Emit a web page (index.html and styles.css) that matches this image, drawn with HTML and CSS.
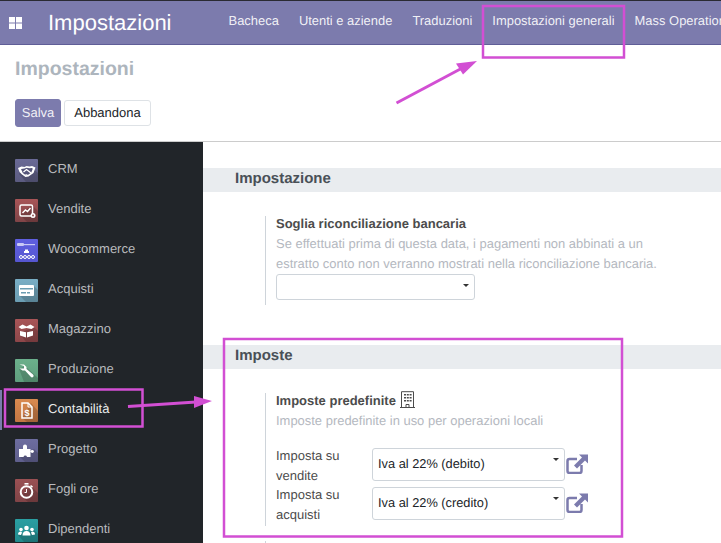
FILE: index.html
```html
<!DOCTYPE html>
<html lang="it">
<head>
<meta charset="utf-8">
<title>Impostazioni</title>
<link rel="stylesheet" href="styles.css">
</head>
<body>
<div class="page">
  <header class="navbar">
    <svg class="apps" viewBox="0 0 13 12" width="13" height="12"><rect width="6" height="5.5"/><rect x="7" width="6" height="5.5"/><rect y="6.5" width="6" height="5.5"/><rect x="7" y="6.5" width="6" height="5.5"/></svg>
    <div class="brand">Impostazioni</div>
    <nav class="menu">
      <a>Bacheca</a><a>Utenti e aziende</a><a>Traduzioni</a><a>Impostazioni generali</a><a>Mass Operations</a>
    </nav>
  </header>
  <section class="control">
    <h1>Impostazioni</h1>
    <div class="buttons">
      <button class="btn primary">Salva</button>
      <button class="btn plain">Abbandona</button>
    </div>
  </section>
  <div class="body">
    <aside class="side">
      <div class="item"><span class="app crm"><svg viewBox="0 0 23 23"><path class="sh" d="M23 23H11L4 15l3-6 9-1 7 6z"/><path class="wf" d="M3 9l3.500-1.500 3 .5 2-1 3 .5 2.500-.5 3.500 1.500-2 5.500-5 3.500-3 .5-3.500-2.500-2.500-2.500z"/><path class="hole" d="M6 10l3.500-.5 2-.8 3 .5 2.500-.2.800.8-1.500 3.700-3.500 2.500-2 .3-3-2.300z"/><path class="stline" d="M8.500 13l3-2.500 4.500 3.500M10.500 15.500l2.500 1"/></svg></span><span class="name">CRM</span></div>
      <div class="item"><span class="app ven"><svg viewBox="0 0 23 23"><path class="sh" d="M23 23H12L5 16 17 6l6 6z"/><rect class="st" x="5" y="6" width="12.500" height="11" rx="1.500"/><path class="st" d="M7.500 14l3-3 2 1.500 3-3.500"/><circle class="wf" cx="18" cy="16.500" r="2.500"/><circle class="venhole" cx="18" cy="16.500" r=".9"/></svg></span><span class="name">Vendite</span></div>
      <div class="item"><span class="app woo"><svg viewBox="0 0 23 23"><rect class="pale" x="2" y="4" width="7" height="3" rx="1"/><rect class="pale" x="9" y="5" width="11" height="1.200"/><path class="wf" d="M10 10.500h3v1.500h1v2h-5v-2h1z"/><circle class="st thin" cx="6" cy="18" r="1.500"/><circle class="st thin" cx="10" cy="18" r="1.500"/><circle class="st thin" cx="14" cy="18" r="1.500"/><circle class="st thin" cx="18" cy="18" r="1.500"/></svg></span><span class="name">Woocommerce</span></div>
      <div class="item"><span class="app acq"><svg viewBox="0 0 23 23"><path class="sh" d="M23 23H11L4 16l15-9 4 4z"/><rect class="wf" x="4" y="6" width="15" height="11" rx="1"/><rect class="cut" x="5" y="9" width="13" height="1.500"/><rect class="cut" x="6" y="13" width="5" height="1.500"/><rect class="cut" x="12" y="13" width="3" height="1.500"/></svg></span><span class="name">Acquisti</span></div>
      <div class="item"><span class="app mag"><svg viewBox="0 0 23 23"><path class="sh" d="M23 23H11L4 14l15-6 4 4z"/><path class="wf" d="M3.500 8l4-2.500 4 2 4-2 4 2.500-3 2-5-1-5 1z"/><path class="wf" d="M5 12l6 1.200V18.500L5 16.500zM18 12l-6 1.200V18.500l6-2z"/></svg></span><span class="name">Magazzino</span></div>
      <div class="item"><span class="app pro"><svg viewBox="0 0 23 23"><path class="sh" d="M23 23H9L4 10l6-3 13 12z"/><path class="wf" d="M4.500 5.500h4.500l2.500 2.500v2l6.500 5.500q1.500 1.500 0 2.500q-1 1-2.500-.5l-5.500-6h-2.500l-3-2h4.500v-2.500z"/></svg></span><span class="name">Produzione</span></div>
      <div class="item active"><span class="app con"><svg viewBox="0 0 23 23"><path class="sh" d="M23 23H12L7 19 16 4l7 8z"/><path class="st" d="M7 4h6l4 4v11H7z"/><path class="st thin" d="M13 4v4h4"/><text class="dollar" x="12" y="16.500">$</text></svg></span><span class="name">Contabilità</span></div>
      <div class="item"><span class="app prg"><svg viewBox="0 0 23 23"><path class="sh" d="M23 23H10L4 17l15-7 4 4z"/><path class="wf" d="M4 10h4V7.500a2 2 0 0 1 4 0V10h3.500v2.500a1.800 1.800 0 0 1 3.500 0 1.800 1.800 0 0 1-3.500 0V18h-3.500a1.800 1.800 0 0 0-3.500 0H4z"/></svg></span><span class="name">Progetto</span></div>
      <div class="item"><span class="app fog"><svg viewBox="0 0 23 23"><path class="sh" d="M23 23H13L6 17 16 7l7 7z"/><circle class="st thick" cx="11.500" cy="13" r="5.800"/><rect class="wf" x="9.500" y="4" width="4" height="1.600"/><path class="wf" d="M16 6l2 1.500-1 1.200-2-1.500z"/><path class="st thin" d="M11.500 10v3.500H9.500"/></svg></span><span class="name">Fogli ore</span></div>
      <div class="item"><span class="app dip"><svg viewBox="0 0 23 23"><path class="sh" d="M23 23H9L3 16l16-5 4 4z"/><circle class="wf" cx="11.500" cy="9" r="2.300"/><circle class="wf" cx="6" cy="10.500" r="1.800"/><circle class="wf" cx="17" cy="10.500" r="1.800"/><path class="wf" d="M7.500 16.500c0-3 1.500-4.500 4-4.500s4 1.500 4 4.500zM3 15.500c0-2 1-3 3-3l1 1-1 2.500zM20 15.500c0-2-1-3-3-3l-1 1 1 2.500z"/></svg></span><span class="name">Dipendenti</span></div>
    </aside>
    <main class="main">
      <h2 class="section">Impostazione</h2>
      <div class="setting first">
        <div class="label">Soglia riconciliazione bancaria</div>
        <div class="desc">Se effettuati prima di questa data, i pagamenti non abbinati a un estratto conto non verranno mostrati nella riconciliazione bancaria.</div>
        <div class="select short"><span class="caret"></span></div>
      </div>
      <h2 class="section gap">Imposte</h2>
      <div class="setting second">
        <div class="label withicon"><span>Imposte predefinite</span>
          <svg class="building" viewBox="0 0 15 17" width="15" height="17"><path d="M1.500 16.500V.7h12v15.800M0 16.500h15M6 16.500v-3h3v3" fill="none" stroke="#4c4c4c" stroke-width="1"/><path d="M4 3h2v1.500H4zM6.800 3h2v1.500h-2zM9.600 3h2v1.500h-2zM4 6h2v1.500H4zM6.800 6h2v1.500h-2zM9.600 6h2v1.500h-2zM4 9h2v1.500H4zM6.800 9h2v1.500h-2zM9.600 9h2v1.500h-2z" fill="#4c4c4c"/></svg>
        </div>
        <div class="desc">Imposte predefinite in uso per operazioni locali</div>
        <div class="rows">
          <div class="row">
            <div class="rowlabel">Imposta su vendite</div>
            <div class="select wide">Iva al 22% (debito)<span class="caret"></span></div>
            <svg class="ext" viewBox="0 0 22 20" width="22" height="20"><path d="M11 5H3.500A2 2 0 0 0 1.500 7v10a2 2 0 0 0 2 2h10a2 2 0 0 0 2-2v-6" fill="none" stroke="#7c7bad" stroke-width="2.500"/><path d="M13 0.500h9v9l-3-3-8 8-3-3 8-8z" fill="#7c7bad"/></svg>
          </div>
          <div class="row">
            <div class="rowlabel">Imposta su acquisti</div>
            <div class="select wide">Iva al 22% (credito)<span class="caret"></span></div>
            <svg class="ext" viewBox="0 0 22 20" width="22" height="20"><path d="M11 5H3.500A2 2 0 0 0 1.500 7v10a2 2 0 0 0 2 2h10a2 2 0 0 0 2-2v-6" fill="none" stroke="#7c7bad" stroke-width="2.500"/><path d="M13 0.500h9v9l-3-3-8 8-3-3 8-8z" fill="#7c7bad"/></svg>
          </div>
        </div>
      </div>
      <div class="setting third"></div>
    </main>
  </div>
  <svg class="notes" viewBox="0 0 721 543" width="721" height="543">
    <g fill="none" stroke="#d24fd3" stroke-width="2.500">
      <rect x="483" y="6" width="141" height="51.500"/>
      <rect x="5" y="389.500" width="137.500" height="37"/>
      <rect x="224" y="339" width="398" height="197.500"/>
      <path d="M396.500 103L466 66" stroke-width="3"/>
      <path d="M128 406.500L196 402" stroke-width="3"/>
    </g>
    <path d="M477 61L463 74.500 456 63.500z" fill="#d24fd3"/>
    <path d="M212 401L194 408V396z" fill="#d24fd3"/>
  </svg>
</div>
</body>
</html>
```
FILE: styles.css
```css
* { box-sizing: border-box; }
html, body { margin: 0; padding: 0; }
body { font-family: "Liberation Sans", Arial, sans-serif; font-size: 13px; color: #212529; background: #fff; text-rendering: geometricPrecision; }
.page { position: relative; width: 721px; height: 543px; overflow: hidden; display: flex; flex-direction: column; }

.navbar { flex: none; height: 45px; display: flex; align-items: center; background: #7c7bad; border-top: 1px solid #2a2a33; border-bottom: 1px solid #5f5e97; color: #fff; white-space: nowrap; }
.apps { flex: none; margin-left: 9px; fill: #fff; }
.brand { flex: none; margin-left: 26px; font-size: 22px; line-height: 28px; }
.menu { display: flex; margin-left: 47px; font-size: 12.94px; color: rgba(255,255,255,.9); }
.menu a { flex: none; padding: 0 10px; line-height: 20px; margin-top: -3px; }

.control { flex: none; height: 97px; padding: 12px 15px 0; border-bottom: 1px solid #ccc; }
.control h1 { margin: 0; font-size: 19.5px; line-height: 24px; font-weight: 700; color: #adb5bd; }
.buttons { display: flex; align-items: center; gap: 3px; margin-top: 18px; }
.btn { font: inherit; text-rendering: inherit; padding: 0 0 2px; cursor: default; border-radius: 3px; }
.primary { width: 46px; height: 28px; background: #7c7bad; border: 1px solid #7c7bad; color: rgba(255,255,255,.9); }
.plain { width: 87px; height: 26px; background: #fff; border: 1px solid #dee2e6; color: #212529; }

.body { flex: 1; min-height: 0; display: flex; }
.side { flex: none; width: 203px; padding-top: 8px; background: #212529; color: #b9bbbe; overflow: hidden; }
.item { display: flex; align-items: center; gap: 10px; height: 40px; padding-left: 15px; }
.item.active { color: #eceded; padding-left: 13px; border-left: 2px solid #7c7bad; }
.name { margin-top: -3px; }
.app { flex: none; display: block; width: 23px; height: 23px; border-radius: 1px; overflow: hidden; }
.app svg { display: block; width: 23px; height: 23px; }
.crm { background: linear-gradient(#6a6a96, #5b5b80); }
.ven { background: linear-gradient(#a85557, #7f4447); }
.woo { background: linear-gradient(#5f5fe0, #5656d0); }
.acq { background: linear-gradient(#79aec5, #6b9db2); }
.mag { background: linear-gradient(#a85557, #8c4649); }
.pro { background: linear-gradient(#6bb08b, #5f9e7e); }
.con { background: linear-gradient(#d98a4f, #c27643); }
.prg { background: linear-gradient(#6d6d9f, #5f5f8c); }
.fog { background: linear-gradient(#9a5053, #804447); }
.dip { background: linear-gradient(#2a9fa2, #238a8d); }
.sh { fill: rgba(0,0,0,.16); }
.wf { fill: #fff; }
.st { fill: none; stroke: #fff; stroke-width: 1.5; }
.stline { fill: none; stroke: #fff; stroke-width: 1.2; }
.thin { stroke-width: 1; }
.thick { stroke-width: 2; }
.pale { fill: #c9c9f5; }
.cut { fill: #6b9db2; }
.hole { fill: #55557a; }
.venhole { fill: #8a4749; }
.dollar { fill: #fff; font-size: 9px; font-weight: 700; text-anchor: middle; font-family: "Liberation Sans", sans-serif; }

.main { flex: 1; min-width: 0; padding-top: 26px; overflow: hidden; color: #4c4c4c; }
.section { margin: 0; height: 24px; padding-left: 32px; background: #e9ecef; font-size: 15px; line-height: 22px; font-weight: 700; color: #495057; }
.section.gap { margin-top: 40px; }
.setting { margin: 24px 0 0 62px; padding-left: 10px; border-left: 1px solid #ced4da; width: 405px; }
.setting.first { height: 89px; }
.setting.second { height: 133px; }
.setting.third { margin-top: 15px; height: 20px; }
.label { font-weight: 700; line-height: 15px; height: 18px; color: #4c4c4c; }
.withicon { display: flex; align-items: flex-start; gap: 4px; }
.building { flex: none; margin-top: -2px; }
.desc { font-size: 12.96px; line-height: 19.500px; color: #b4b8c0; }
.select { position: relative; border: 1px solid #ced4da; border-radius: 3px; background: #fff; color: #212529; }
.short { width: 199px; height: 26px; margin-top: 1px; }
.wide { flex: none; width: 193px; height: 33px; margin-top: 2px; padding: 0 5px; font-size: 12.8px; line-height: 29px; }
.caret { position: absolute; right: 5px; top: 9px; width: 0; height: 0; border: 3px solid transparent; border-top: 3px solid #333; border-bottom: 0; }
.rows { margin-top: 15.500px; }
.row { display: flex; height: 39px; }
.rowlabel { flex: none; width: 96px; padding-right: 20px; line-height: 19.500px; }
.ext { flex: none; margin: 8px 0 0 1px; }

.notes { position: absolute; left: 0; top: 0; pointer-events: none; }
```
